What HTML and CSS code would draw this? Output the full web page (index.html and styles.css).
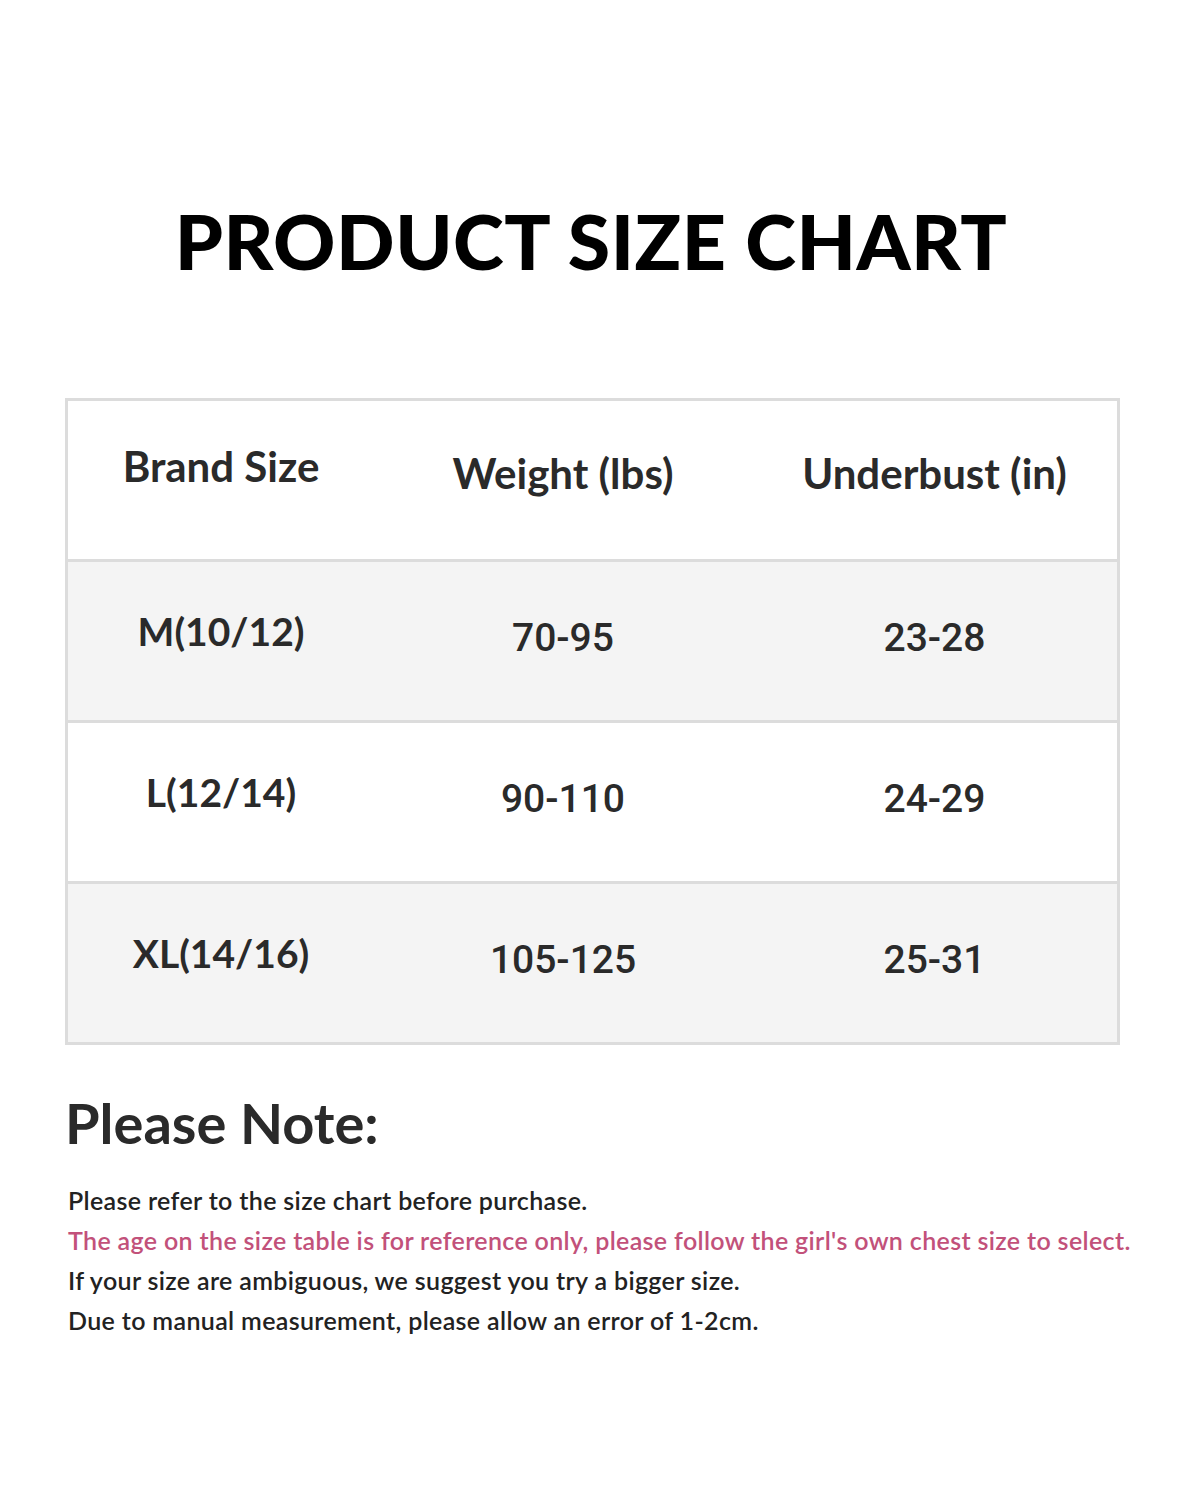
FILE: index.html
```html
<!DOCTYPE html>
<html lang="en">
<head>
<meta charset="utf-8">
<title>Product Size Chart</title>
<link rel="stylesheet" href="styles.css">
</head>
<body>
<main class="page">
  <h1 class="title">PRODUCT SIZE CHART</h1>
  <div class="chart">
    <div class="row head">
      <div class="cell c1">Brand Size</div>
      <div class="cell c2">Weight (lbs)</div>
      <div class="cell c3">Underbust (in)</div>
    </div>
    <div class="row shade">
      <div class="cell c1">M(10/12)</div>
      <div class="cell c2 num">70-95</div>
      <div class="cell c3 num">23-28</div>
    </div>
    <div class="row">
      <div class="cell c1">L(12/14)</div>
      <div class="cell c2 num">90-110</div>
      <div class="cell c3 num">24-29</div>
    </div>
    <div class="row shade">
      <div class="cell c1">XL(14/16)</div>
      <div class="cell c2 num">105-125</div>
      <div class="cell c3 num">25-31</div>
    </div>
  </div>
  <section class="notes">
    <h2 class="notes-title">Please Note:</h2>
    <p class="note">Please refer to the size chart before purchase.</p>
    <p class="note pink">The age on the size table is for reference only, please follow the girl's own chest size to select.</p>
    <p class="note">If your size are ambiguous, we suggest you try a bigger size.</p>
    <p class="note">Due to manual measurement, please allow an error of 1-2cm.</p>
  </section>
</main>
</body>
</html>
```

FILE: styles.css
```css
html, body {
  margin: 0;
  padding: 0;
  background: #ffffff;
}

.page {
  width: 1200px;
  height: 1500px;
  box-sizing: border-box;
  padding: 190px 0 0 65px;
  font-family: "Lato", "DejaVu Sans", sans-serif;
  color: #2a2a2a;
}

.title {
  margin: 0 0 0 -65px;
  width: 1200px;
  box-sizing: border-box;
  padding-right: 18px;
  text-align: center;
  font-family: "Lato", sans-serif;
  font-weight: 900;
  font-size: 77px;
  line-height: 100px;
  letter-spacing: 0.5px;
  color: #000000;
}

.chart {
  margin-top: 108px;
  width: 1055px;
  box-sizing: border-box;
  border: 3px solid #dcdcdc;
  display: flex;
  flex-direction: column;
}

.row {
  display: grid;
  grid-template-columns: 306px 378px 1fr;
  height: 158px;
  box-sizing: border-box;
  padding-bottom: 6px;
  align-items: center;
  background: #ffffff;
}

.row + .row {
  height: 161px;
  border-top: 3px solid #dcdcdc;
}

.row.head {
  padding-bottom: 14px;
}

.row.shade {
  background: #f4f4f4;
}

.cell {
  text-align: center;
  font-size: 39px;
  font-weight: 700;
  color: #2a2a2a;
}

.cell.c1 {
  padding-bottom: 14px;
}

.head .cell {
  font-size: 42px;
  font-weight: 700;
}

.cell.num {
  font-family: "Roboto", "Liberation Sans", sans-serif;
  font-weight: 500;
  font-size: 39px;
}

.notes {
  margin-top: 43px;
}

.notes-title {
  margin: 0 0 22px 0;
  font-size: 56px;
  font-weight: 700;
  line-height: 70px;
  color: #2a2a2a;
}

.note {
  margin: 0 0 0 3px;
  font-size: 25px;
  letter-spacing: 0.35px;
  line-height: 40px;
  font-weight: 600;
  white-space: nowrap;
  color: #222222;
}

.note.pink {
  color: #c2517a;
}
```
